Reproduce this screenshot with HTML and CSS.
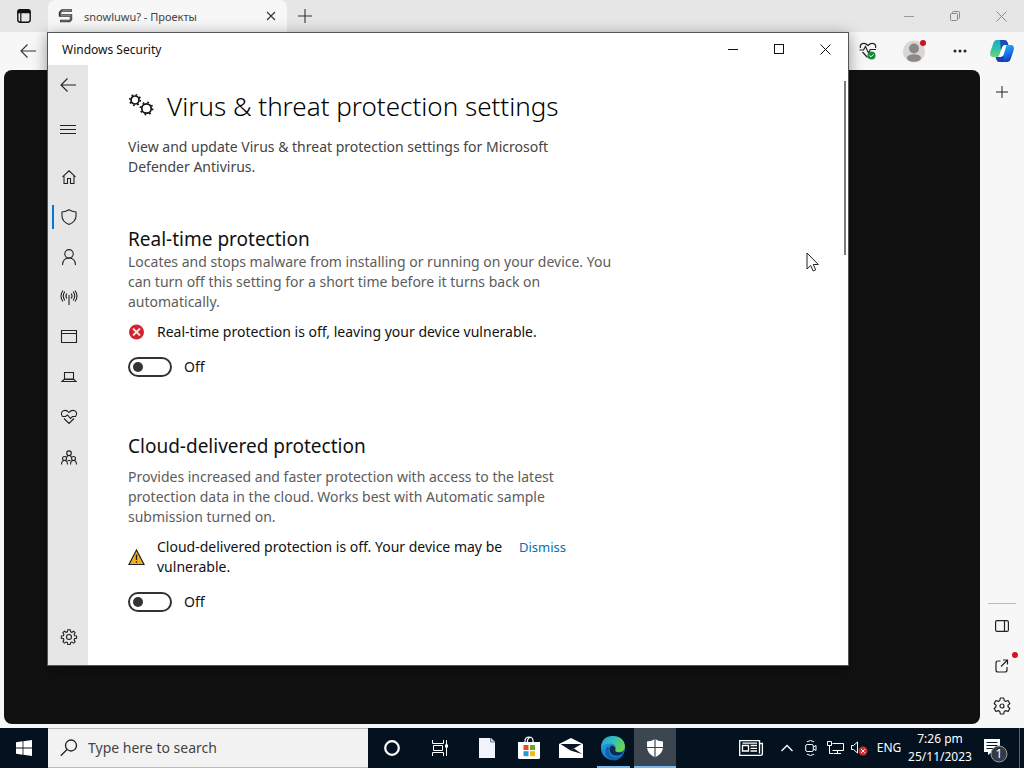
FILE: index.html
```html
<!DOCTYPE html>
<html lang="en">
<head>
<meta charset="utf-8">
<title>Windows Security</title>
<link rel="stylesheet" href="styles.css">
</head>
<body>
<div class="desktop">
  <div class="browser">
    <header class="tabstrip">
      <button class="tab-actions" aria-label="Tab actions">
        <svg width="16" height="16" viewBox="0 0 16 16"><rect x="1.8" y="1.8" width="12.4" height="12.4" rx="2.4" fill="none" stroke="#111" stroke-width="1.4"/><path d="M1.5 3.5Q1.5 1.5 3.5 1.5h9q2 0 2 2v1.8h-13z" fill="#111"/><path d="M4.8 5v9" stroke="#111" stroke-width="1.2"/></svg>
      </button>
      <div class="tab">
        <svg width="16" height="14" viewBox="0 0 16 14"><path d="M14 1.500H4L2 3.500v3h11v4L11.500 12H2" fill="none" stroke="#333" stroke-width="2.400"/><path d="M13.500 1.500H4.500L3 3v3.500h10v4L11.500 12H2.500" fill="none" stroke="#bbb" stroke-width=".6"/></svg>
        <span class="tab-title">snowluwu? - Проекты</span>
        <button class="tab-close" aria-label="Close tab"><svg width="10" height="10" viewBox="0 0 10 10"><path d="M1 1l8 8M9 1L1 9" stroke="#333" stroke-width="1.1"/></svg></button>
      </div>
      <button class="tab-new" aria-label="New tab"><svg width="14" height="14" viewBox="0 0 14 14"><path d="M7 0v14M0 7h14" stroke="#333" stroke-width="1.1"/></svg></button>
      <div class="browser-controls">
        <button aria-label="Minimize browser"><svg width="10" height="10" viewBox="0 0 10 10"><path d="M0 5.5h10" stroke="#999"/></svg></button>
        <button aria-label="Restore browser"><svg width="10" height="10" viewBox="0 0 10 10" fill="none" stroke="#888"><rect x=".5" y="2.5" width="7" height="7" rx="1"/><path d="M2.5 2.5V1.5q0-1 1-1h5q1 0 1 1v5q0 1-1 1h-.7"/></svg></button>
        <button aria-label="Close browser"><svg width="11" height="11" viewBox="0 0 11 11"><path d="M.5.5l10 10M10.500.5l-10 10" stroke="#888"/></svg></button>
      </div>
    </header>
    <div class="toolbar">
      <button class="browser-back" aria-label="Back"><svg width="16" height="14" viewBox="0 0 16 14"><path d="M7.500.5L1 7l6.500 6.500M1 7h15" fill="none" stroke="#333" stroke-width="1.1"/></svg></button>
      <div class="toolbar-end">
        <button aria-label="Browser essentials"><svg width="18" height="18" viewBox="0 0 18 18"><path d="M1.500 6C.3 1.500 5.500-.2 9 3.500 12.500-.2 17.700 1.500 16.500 6M3.500 10l5 5.500M.5 8h4l2-3.500 3 6.500 1.800-3.500H17" fill="none" stroke="#222" stroke-width="1.200"/><circle cx="12.500" cy="13.500" r="4" fill="#168a35"/><path d="M10.500 13.500l1.500 1.300 2.500-2.500" fill="none" stroke="#fff"/></svg></button>
        <button class="profile" aria-label="Profile"><svg width="24" height="24" viewBox="0 0 24 24"><circle cx="12" cy="12.500" r="11" fill="#d8d7d6"/><circle cx="12" cy="9.500" r="5" fill="#8b8886"/><ellipse cx="12" cy="19" rx="7" ry="3.800" fill="#8b8886"/><circle cx="21" cy="4" r="3" fill="#c9131c"/></svg></button>
        <button aria-label="Settings and more"><svg width="14" height="4" viewBox="0 0 14 4" fill="#222"><circle cx="2" cy="2" r="1.500"/><circle cx="7" cy="2" r="1.500"/><circle cx="12" cy="2" r="1.500"/></svg></button>
        <button class="copilot" aria-label="Copilot"><svg width="24" height="22" viewBox="0 0 24 22"><defs><linearGradient id="ca" x1="0" y1="0" x2="0" y2="1"><stop offset="0" stop-color="#1ba6d2"/><stop offset=".5" stop-color="#2fc3a5"/><stop offset="1" stop-color="#74cf7d"/></linearGradient><linearGradient id="cb" x1="0" y1="0" x2=".4" y2="1"><stop offset="0" stop-color="#34c3f5"/><stop offset=".6" stop-color="#1679e8"/><stop offset="1" stop-color="#153cc2"/></linearGradient></defs><path d="M7 0h7L9.500 15q-.6 2-2.500 2H2.500Q-.5 16.500.3 12L3 4Q4 0 7 0z" fill="url(#ca)"/><path d="M10 0h5q2 0 2.700 2.500L18.500 5H15q-2 0-2.700 2L11 11z" fill="#1550b8"/><path d="M17 22h-7l4.500-15Q15.100 5 17 5h4.500q3 .5 2.200 5L21 18q-1 4-4 4z" fill="url(#cb)"/><path d="M14 22H9.500Q7 22 6.300 19.500L5.600 17h3q2 0 2.500-2l1.700-5z" fill="#173fba"/><path d="M12.300 7q1-2 4.200-2l-3 10q-.8 2-4.500 2z" fill="#fff"/></svg></button>
      </div>
    </div>
    <div class="browser-body">
      <main class="web-page"></main>
      <aside class="edge-sidebar">
        <button aria-label="Customize sidebar"><svg width="12" height="12" viewBox="0 0 12 12"><path d="M6 0v12M0 6h12" stroke="#222"/></svg></button>
        <div class="edge-bottom">
          <button aria-label="Toggle sidebar"><svg width="14" height="12" viewBox="0 0 14 12" fill="none" stroke="#222" stroke-width="1.200"><rect x=".6" y=".6" width="12.800" height="10.800" rx="1.500"/><path d="M9.500.5v11"/></svg></button>
          <button class="with-dot" aria-label="Open link"><svg width="14" height="14" viewBox="0 0 14 14" fill="none" stroke="#222" stroke-width="1.200"><path d="M5.500 2H3Q1 2 1 4v7q0 2 2 2h7q2 0 2-2V8M8 1h4.500v4.500M12.500 1L6 7.500"/></svg></button>
          <button aria-label="Browser settings"><svg width="18" height="18" viewBox="0 0 18 18" fill="none" stroke="#222" stroke-width="1.200" stroke-linejoin="round"><path d="M7.300 1h3.400l.5 2.500 1.500.9 2.400-.9 1.700 3L15 8.200v1.600l1.800 1.700-1.700 3-2.400-.9-1.500.9-.5 2.500H7.300l-.5-2.500-1.500-.9-2.400.9-1.700-3L3 9.800V8.200L1.200 6.500l1.700-3 2.400.9 1.500-.9z"/><circle cx="9" cy="9" r="2"/></svg></button>
        </div>
      </aside>
    </div>
  </div>

  <section class="window" aria-label="Windows Security">
    <header class="titlebar">
      <span class="window-title">Windows Security</span>
      <div class="window-controls">
        <button aria-label="Minimize"><svg width="10" height="10" viewBox="0 0 10 10"><path d="M0 5.500h10" stroke="#111"/></svg></button>
        <button aria-label="Maximize"><svg width="10" height="10" viewBox="0 0 10 10"><rect x=".5" y=".5" width="9" height="9" fill="none" stroke="#111"/></svg></button>
        <button aria-label="Close"><svg width="11" height="11" viewBox="0 0 11 11"><path d="M.5.5l10 10M10.500.5l-10 10" stroke="#111"/></svg></button>
      </div>
    </header>
    <div class="window-body">
      <nav class="rail">
        <button class="rail-back" aria-label="Back"><svg width="16" height="16" viewBox="0 0 16 16"><path d="M7.500 1.500L1 8l6.500 6.500M1 8h15"/></svg></button>
        <button class="rail-menu" aria-label="Menu"><svg width="16" height="16" viewBox="0 0 16 16"><path d="M0 3.500h16M0 7.500h16M0 11.500h16"/></svg></button>
        <button aria-label="Home"><svg width="16" height="16" viewBox="0 0 16 16"><path d="M1.500 7.800L8 1.800l6.500 6M3 6.700v7.800h3.500V9.500h3v5H13V6.700"/></svg></button>
        <button class="current" aria-label="Virus and threat protection"><svg width="16" height="16" viewBox="0 0 16 16"><path d="M8 .8Q11 2.800 15 3v4q0 5.500-7 8.500-7-3-7-8.500V3q4-.2 7-2.200z"/></svg></button>
        <button aria-label="Account protection"><svg width="16" height="16" viewBox="0 0 16 16"><circle cx="8" cy="4.800" r="4.200"/><path d="M1.500 16q.3-7 6.500-7t6.500 7"/></svg></button>
        <button aria-label="Firewall and network protection"><svg width="16" height="16" viewBox="0 0 16 16"><path d="M8 6v10M5.800 9.500Q4 7 5.800 4.500M10.200 9.500Q12 7 10.200 4.500M3.800 11.500Q.8 7 3.800 2.500M12.200 11.500q3-4.500 0-9M2 12.500q-4-5.500 0-11M14 12.500q4-5.500 0-11"/></svg></button>
        <button aria-label="App and browser control"><svg width="16" height="16" viewBox="0 0 16 16"><path d="M.5 1.500h15v12H.5zM.5 4.500h15"/></svg></button>
        <button aria-label="Device security"><svg width="16" height="16" viewBox="0 0 16 16"><path d="M3.500 3.500h9v6.500h-9zM3 10.500L1 12.500h14L13 10.500z"/></svg></button>
        <button aria-label="Device performance and health"><svg width="16" height="16" viewBox="0 0 16 16"><path d="M1.500 7.500Q-1 3.500 2.300 1.800 5.500.5 8 3.500 10.500.5 13.700 1.800q3.300 1.700.8 5.700M3 9.500L8 14.500l5-5M1 7.500h3.500L6.500 6l3 3.500 2-2H15"/></svg></button>
        <button aria-label="Family options"><svg width="16" height="16" viewBox="0 0 16 16"><circle cx="8" cy="4.200" r="2.300"/><circle cx="3.500" cy="9.500" r="2"/><circle cx="12.500" cy="9.500" r="2"/><path d="M.5 15.500q0-4 3-4t3 4M9.500 15.500q0-4 3-4t3 4M5.500 8.500Q6 6.500 8 6.500t2.500 2M6.500 12Q8 10.500 9.500 12"/></svg></button>
        <button class="rail-settings" aria-label="Settings"><svg width="16" height="16" viewBox="0 0 16 16"><circle cx="8" cy="8" r="2.500"/><path d="M6.800.8h2.400l.4 2 1.300.5L12.600 2.200l1.500 1.500-1 1.700.5 1.300 2 .3v2.200l-2 .4-.5 1.300 1 1.700-1.500 1.500-1.700-1-1.300.5-.4 1.900H6.800l-.4-2-1.300-.5-1.700 1.100-1.500-1.500 1-1.700-.5-1.300-2-.4V7l2-.3.500-1.300-1-1.700 1.500-1.500 1.700 1.100 1.300-.5z"/></svg></button>
      </nav>
      <main class="content">
        <div class="page-head">
          <svg width="26" height="24" viewBox="0 0 26 24" fill="none" stroke="#111"><circle cx="7" cy="6" r="4" stroke-width="1.700"/><circle cx="7" cy="6" r="5.400" stroke-width="1.500" stroke-dasharray="1.700 2.540"/><circle cx="18.500" cy="14.500" r="4.700" stroke-width="1.700"/><circle cx="18.500" cy="14.500" r="6.200" stroke-width="1.500" stroke-dasharray="1.800 3.070"/></svg>
          <h1>Virus &amp; threat protection settings</h1>
        </div>
        <p class="intro">View and update Virus &amp; threat protection settings for Microsoft Defender Antivirus.</p>

        <section class="setting">
          <h2 id="rt">Real-time protection</h2>
          <p class="about">Locates and stops malware from installing or running on your device. You can turn off this setting for a short time before it turns back on automatically.</p>
          <div class="status">
            <svg width="17" height="16" viewBox="0 0 17 16"><circle cx="8.500" cy="8" r="7.500" fill="#cf2430"/><path d="M5 4.500l7 7M12 4.500l-7 7" stroke="#fbe3e0" stroke-width="1.800"/></svg>
            <span>Real-time protection is off, leaving your device vulnerable.</span>
          </div>
          <label class="switch"><input type="checkbox" role="switch" aria-describedby="rt"><span>Off</span></label>
        </section>

        <section class="setting roomy">
          <h2 id="cd">Cloud-delivered protection</h2>
          <p class="about">Provides increased and faster protection with access to the latest protection data in the cloud. Works best with Automatic sample submission turned on.</p>
          <div class="status">
            <svg width="17" height="17" viewBox="0 0 17 17"><path d="M8.500 1L16 15.500H1z" fill="#f3b21b" stroke="#222" stroke-width="1.200"/><path d="M8.500 5.500V11M8.500 12.300v1.500" stroke="#222" stroke-width="1.400"/></svg>
            <span class="status-text">Cloud-delivered protection is off. Your device may be vulnerable.</span>
            <a class="dismiss" href="#dismiss">Dismiss</a>
          </div>
          <label class="switch"><input type="checkbox" role="switch" aria-describedby="cd"><span>Off</span></label>
        </section>
      </main>
      <div class="scroll-thumb"></div>
    </div>
  </section>

  <svg class="pointer" width="14" height="20" viewBox="0 0 14 20"><path d="M1 1v16l3.700-3.500 2.500 5.500 2.500-1.100L7.300 12.500h5z" fill="#fff" stroke="#222"/></svg>

  <footer class="taskbar">
    <button class="start" aria-label="Start"><svg width="16" height="16" viewBox="0 0 16 16" fill="#fff"><path d="M0 2.200l6.600-.9v6.300H0zM7.400 1.200L16 0v7.600H7.400zM0 8.400h6.600v6.300L0 13.800zM7.400 8.400H16V16l-8.600-1.200z"/></svg></button>
    <label class="search">
      <svg width="18" height="18" viewBox="0 0 18 18" fill="none" stroke="#222" stroke-width="1.300"><circle cx="11" cy="6.500" r="5.500"/><path d="M7 10.500L.8 16.800"/></svg>
      <input type="text" placeholder="Type here to search" aria-label="Search">
    </label>
    <div class="shell-buttons">
      <button aria-label="Cortana"><svg width="16" height="16" viewBox="0 0 16 16"><circle cx="8" cy="8" r="6.800" fill="none" stroke="#fff" stroke-width="2.200"/></svg></button>
      <button aria-label="Task view"><svg width="16" height="16" viewBox="0 0 16 16" fill="none" stroke="#fff"><path d="M.5 0v3.500h11V0M.5 16v-3.500h11V16M1.500 5.500h9v5h-9zM14.500 0v16"/><path d="M13 4.500h3v3h-3z" fill="#fff" stroke="none"/></svg></button>
    </div>
    <div class="apps">
      <button aria-label="Document"><svg width="16" height="22" viewBox="0 0 16 22"><path d="M0 1h12l4 4v16H0z" fill="#f1f4fb"/><path d="M11.500 1v4H16" fill="#c9d3e6" stroke="#6c7c98"/></svg></button>
      <button aria-label="Microsoft Store"><svg width="24" height="24" viewBox="0 0 24 24"><path d="M8 7V5q0-4 4-4t4 4v2M10.500 6V4.500q.3-3 3.500-3" fill="none" stroke="#fff" stroke-width="1.200"/><path d="M1 6h22v15.500q0 1.500-1.500 1.500h-19Q1 23 1 21.500z" fill="#fff"/><path d="M6.500 9h5v5h-5z" fill="#e34c26"/><path d="M13 9h5v5h-5z" fill="#73a51e"/><path d="M6.500 15.200h5v5h-5z" fill="#1e9cdf"/><path d="M13 15.200h5v5h-5z" fill="#f6b71c"/></svg></button>
      <button aria-label="Mail"><svg width="24" height="20" viewBox="0 0 24 20"><path d="M0 6L12 0l12 6v14H0z" fill="#fff"/><path d="M1.500 6h21L11.500 12.500z" fill="#071725"/><path d="M11.500 12.500L15 10.500l8 5.500z" fill="#071725"/></svg></button>
      <button class="running" aria-label="Microsoft Edge"><svg width="24" height="24" viewBox="0 0 24 24"><defs><linearGradient id="ea" x1="0" y1="0" x2="1" y2=".5"><stop offset="0" stop-color="#239bd8"/><stop offset=".5" stop-color="#30bfc0"/><stop offset="1" stop-color="#6bd64a"/></linearGradient><linearGradient id="eb" x1="0" y1="0" x2="1" y2="1"><stop offset="0" stop-color="#27a2e5"/><stop offset="1" stop-color="#1269bd"/></linearGradient></defs><circle cx="12" cy="12" r="12" fill="url(#eb)"/><path d="M0 11Q1 0 12 0q11 .5 12 10-.2 6-6.500 6-4.500 0-3-3 .8-5-4-5.500Q4 7 0 11z" fill="url(#ea)"/><path d="M8 11q-2 9 6 10.500 5 .5 8.500-3.500Q18 26 10.500 24 4 21 4.500 15 5 10 8 11z" fill="#145fae"/><path d="M10 9.500q4.500.5 4.500 3.500-1.500 3 3 3.500 3 .3 5.200-1.300Q20 20 15 19.500q-6-.5-6.500-6 0-2 1.500-4z" fill="#0b2b50"/></svg></button>
      <button class="running active" aria-label="Windows Security"><svg width="18" height="20" viewBox="0 0 18 20"><path d="M9 1q3 2.300 8 2.500V9q0 6.500-8 10.500Q1 15.500 1 9V3.500Q6 3.300 9 1z" fill="#fff"/><path d="M9 0v20M0 9.500h18" stroke="#3b4651" stroke-width="1.200"/></svg></button>
    </div>
    <div class="tray">
      <button class="news" aria-label="News"><svg width="24" height="16" viewBox="0 0 24 16" fill="none" stroke="#fff" stroke-width="1.300"><path d="M20.500.7H.7v14.600h21q1.700 0 1.700-2V3.500h-3zM20.500 1v12.500"/><path d="M3.500 5.500h6v5.500h-6zM11.500 5.500h6.500M11.500 8.300h6.500M11.500 11h6.500M3.500 3.200h14.500"/></svg></button>
      <button aria-label="Show hidden icons"><svg width="12" height="8" viewBox="0 0 12 8"><path d="M.5 7L6 1.500 11.500 7" fill="none" stroke="#fff" stroke-width="1.300"/></svg></button>
      <button aria-label="Meet now"><svg width="12" height="16" viewBox="0 0 12 16" fill="none" stroke="#fff"><rect x=".7" y="4.500" width="7.600" height="7" rx="1.500"/><path d="M8.500 7L11 5.500v5L8.500 9M2 1.800Q5.500-.8 9 1.800M2 14.200q3.500 2.600 7 0"/></svg></button>
      <button aria-label="Network"><svg width="17" height="14" viewBox="0 0 17 14" fill="none" stroke="#fff"><path d="M5.500 2.500h11v7h-11M10.500 9.500v3M7 12.500h7M.5.500h4v4h-4zM2.500 4.500v8h4"/></svg></button>
      <button aria-label="Volume muted"><svg width="18" height="16" viewBox="0 0 18 16"><path d="M1.500 5.500h2L7.500 2v11L3.500 9.500h-2z" fill="none" stroke="#fff"/><circle cx="13" cy="11" r="4.500" fill="#c9303a"/><path d="M11.200 9.200l3.600 3.600M14.800 9.200l-3.600 3.600" stroke="#fff"/></svg></button>
      <button class="language">ENG</button>
      <button class="clock"><span>7:26 pm</span><span>25/11/2023</span></button>
      <button class="notifications" aria-label="Notifications"><svg width="24" height="22" viewBox="0 0 24 22"><path d="M0 2h16v13H8l-4 3v-3H0z" fill="#fff"/><path d="M2.500 5.500h11M2.500 8.500h11M2.500 11.500h7" stroke="#071725" stroke-width="1.200"/><circle cx="15" cy="17" r="8" fill="#343b45" stroke="#9399a0"/></svg><span class="count">1</span></button>
      <button class="show-desktop" aria-label="Show desktop"></button>
    </div>
  </footer>
</div>
</body>
</html>
```
FILE: styles.css
```css
* { box-sizing: border-box; }
body { margin: 0; font-family: "Noto Sans", "Open Sans", sans-serif; color: #111; }
h1, h2, p { margin: 0; }
button { border: 0; padding: 0; background: none; font: inherit; color: inherit; display: flex; align-items: center; justify-content: center; }
svg { display: block; flex: none; overflow: visible; }

.desktop { position: relative; height: 100vh; display: flex; flex-direction: column; overflow: hidden; }

/* Browser behind the window */
.browser { flex: 1; display: flex; flex-direction: column; min-height: 0; background: #f7f7f8; }
.tabstrip { height: 32px; display: flex; align-items: stretch; background: #e6e6e6; }
.tab-actions { width: 48px; }
.tab { width: 239px; display: flex; align-items: center; gap: 10px; padding: 0 10px; background: #f7f7f7; border-radius: 7px 7px 0 0; }
.tab-title { flex: 1; font-size: 11px; color: #444; }
.tab-close { width: 12px; height: 12px; }
.tab-new { width: 36px; }
.browser-controls { margin-left: auto; display: flex; }
.browser-controls button { width: 46px; }

.toolbar { height: 38px; display: flex; align-items: center; justify-content: space-between; }
.browser-back { width: 56px; height: 38px; }
.toolbar-end { display: flex; }
.toolbar-end button { width: 40px; height: 38px; }
.toolbar-end .profile { width: 52px; }
.toolbar-end .copilot { width: 44px; }

.browser-body { flex: 1; display: flex; min-height: 0; padding-left: 4px; }
.web-page { flex: 1; margin-bottom: 4px; background: #111; border-radius: 8px; }
.edge-sidebar { width: 44px; display: flex; flex-direction: column; justify-content: space-between; align-items: center; padding-bottom: 2px; }
.edge-sidebar button { width: 40px; height: 40px; }
.edge-sidebar > button { height: 44px; }
.edge-bottom { border-top: 1px solid #bbb; padding-top: 2px; display: flex; flex-direction: column; align-items: center; width: 28px; }
.with-dot { position: relative; }
.with-dot::after { content: ""; position: absolute; top: 6px; right: 4px; width: 6px; height: 6px; border-radius: 50%; background: #d3131c; }

/* Windows Security window */
.window { position: absolute; top: 32px; right: 175px; bottom: 102px; left: 47px; display: flex; flex-direction: column; background: #fff; border: 1px solid #555; box-shadow: 0 3px 14px rgba(0, 0, 0, 0.4); }
.titlebar { height: 32px; display: flex; align-items: center; justify-content: space-between; padding-left: 14px; }
.window-title { font-size: 12px; }
.window-controls { display: flex; }
.window-controls button { width: 46px; height: 32px; }
.window-body { position: relative; flex: 1; display: flex; min-height: 0; }
.rail { width: 40px; display: flex; flex-direction: column; background: #e6e6e6; padding-bottom: 8px; }
.rail button { position: relative; height: 40px; padding-left: 2px; }
.rail svg { fill: none; stroke: #222; stroke-width: 1.1px; }
.rail .rail-back { padding-left: 0; }
.rail .rail-menu { margin: 5px 0 7px; padding-left: 0; }
.rail .rail-settings { margin-top: auto; }
.current::before { content: ""; position: absolute; left: 4px; top: 8px; width: 2px; height: 24px; background: #0078d4; }

.content { flex: 1; padding: 21px 32px 0 40px; font-size: 14px; line-height: 20px; overflow: hidden; }
.page-head { display: flex; align-items: center; gap: 13px; }
h1 { font-size: 26px; line-height: 40px; font-weight: 300; color: #000; }
.intro { max-width: 460px; margin: 11px 0 49px; color: #444; }
h2 { font-size: 19px; line-height: 26px; font-weight: 400; }
.about { max-width: 490px; color: #5c5c5c; }
.status { display: flex; align-items: center; gap: 8px; margin: 10px 0 15px; }
.status svg { margin-right: 4px; }
.status-text { width: 354px; }
.dismiss { align-self: flex-start; color: #0070b8; font-size: 13px; text-decoration: none; }
.switch { display: flex; align-items: center; gap: 12px; width: max-content; }
.switch input { appearance: none; margin: 0; width: 44px; height: 20px; border: 2px solid #333; border-radius: 10px; padding: 3px; display: flex; }
.switch input::before { content: ""; width: 10px; height: 10px; border-radius: 50%; background: #333; }
.roomy { margin-top: 56px; }
.roomy h2 { margin-bottom: 8px; }
.scroll-thumb { position: absolute; top: 16px; right: 2px; width: 2px; height: 174px; background: #7a7a7a; }

.pointer { position: absolute; left: 806px; top: 252px; }

/* Taskbar */
.taskbar { height: 40px; display: flex; background: #04121f; color: #fff; }
.start { width: 48px; }
.search { width: 320px; display: flex; align-items: center; gap: 10px; padding: 0 12px; background: #f2f2f2; border: solid #bbb; border-width: 1px 0; }
.search input { flex: 1; min-width: 0; border: 0; padding: 0; background: none; font: 14px/20px "Noto Sans", sans-serif; }
.search input::placeholder { color: #444; opacity: 1; }
.shell-buttons, .apps { display: flex; }
.shell-buttons { margin-right: 2px; }
.shell-buttons button { width: 48px; }
.apps button { width: 42px; }
.apps .running { background: linear-gradient(#76b9ed, #76b9ed) center bottom / 33px 2px no-repeat; }
.apps .active { background-color: #3b4651; background-size: 100% 2px; }
.tray { margin-left: auto; display: flex; font-size: 12px; line-height: 18px; }
.tray button { width: 24px; }
.tray .news { width: 48px; }
.tray .language { width: 36px; }
.tray .clock { width: 66px; flex-direction: column; }
.tray .notifications { position: relative; width: 46px; }
.count { position: absolute; left: 18px; top: 17px; width: 16px; text-align: center; }
.tray .show-desktop { width: 5px; border-left: 1px solid #59636c; }
```
